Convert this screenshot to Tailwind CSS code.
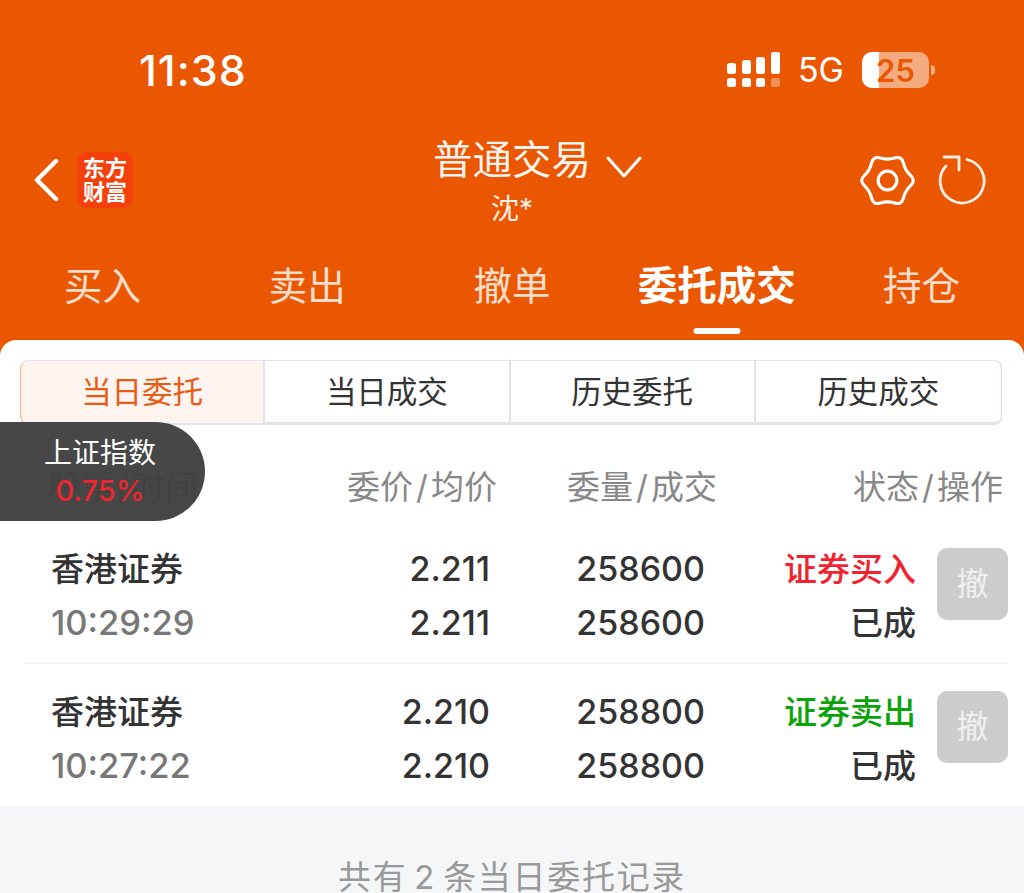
<!DOCTYPE html>
<html lang="zh-CN">
<head>
  <meta charset="UTF-8">
  <meta name="viewport" content="width=device-width, initial-scale=1.0">
  <title>委托成交</title>
  <script src="https://cdn.jsdelivr.net/npm/@tailwindcss/browser@4"></script>
</head>
<body class="bg-[#eb5600] font-['Inter','Noto_Sans_CJK_SC',sans-serif] h-[893px] overflow-hidden relative">

  <!-- status bar -->
  <div class="h-[130px] flex items-center pt-[10px] pl-[139px] pr-[89px] text-white">
    <span class="text-[43px] font-medium leading-none tracking-[1px]">11:38</span>
    <div class="ml-auto flex items-center">
      <svg width="54" height="36" viewBox="0 0 54 36" fill="#fff">
        <rect x="0" y="11" width="9" height="11" rx="2.5"/>
        <rect x="15" y="8" width="9" height="14" rx="2.5"/>
        <rect x="29" y="5" width="9" height="17" rx="2.5"/>
        <rect x="44" y="0" width="9" height="22" rx="2.5"/>
        <rect x="0" y="26" width="9" height="9" rx="2.5"/>
        <rect x="15" y="26" width="9" height="9" rx="2.5"/>
        <rect x="29" y="26" width="9" height="9" rx="2.5"/>
        <rect x="44" y="26" width="9" height="9" rx="2.5" opacity="0.35"/>
      </svg>
      <span class="ml-[17px] text-[34px] leading-none">5G</span>
      <div class="ml-[18px] w-[67px] h-[36px] rounded-[10px] bg-white/50 relative overflow-hidden flex items-center justify-center">
        <div class="absolute left-0 top-0 bottom-0 w-[17px] bg-white"></div>
        <span class="relative text-[#eb5600] text-[31px] font-semibold leading-none">25</span>
      </div>
      <div class="ml-[2px] w-[4px] h-[10px] rounded-r-full bg-white/50"></div>
    </div>
  </div>

  <!-- nav -->
  <div class="h-[100px] relative flex items-center justify-between pl-[34px] pr-[38px] text-white">
    <div class="flex items-center gap-[18px]">
      <svg width="25" height="42" viewBox="0 0 25 42" fill="none" stroke="#fff" stroke-width="4.5" stroke-linecap="round" stroke-linejoin="round"><path d="M22 2 3 21l19 19"/></svg>
      <div class="w-[56px] h-[56px] rounded-[10px] bg-[#f4410c] flex flex-col items-center justify-center font-bold text-[22px] leading-[24px]">
        <span>东方</span>
        <span>财富</span>
      </div>
    </div>
    <div class="absolute left-[433px] top-0 flex flex-col">
      <div class="flex items-center">
        <span class="text-[39.5px] leading-[60px] text-white/95">普通交易</span>
        <svg class="ml-[15px] mt-[14px]" width="36" height="24" viewBox="0 0 36 24" fill="none" stroke="#fff" stroke-width="3" stroke-linecap="round" stroke-linejoin="round"><path d="M2 3l16 18L34 3"/></svg>
      </div>
      <span class="pl-[58px] text-[28px] leading-[34px] mt-[2px] text-white/90">沈*</span>
    </div>
    <div class="flex items-center gap-[21px]">
      <svg width="59" height="59" viewBox="0 0 60 60" fill="none" stroke="#fff" stroke-width="3.2" stroke-linejoin="round">
        <path d="M53.47 24.82Q59 30 53.47 35.18Q47.93 40.35 46.22 47.73Q44.5 55.11 37.25 52.9Q30 50.7 22.75 52.9Q15.5 55.11 13.78 47.73Q12.07 40.35 6.53 35.18Q1 30 6.53 24.82Q12.07 19.65 13.78 12.27Q15.5 4.89 22.75 7.1Q30 9.3 37.25 7.1Q44.5 4.89 46.22 12.27Q47.93 19.65 53.47 24.82Z"/>
        <circle cx="30" cy="30" r="9.5"/>
      </svg>
      <svg width="48" height="50" viewBox="0 0 48 50" fill="none" stroke="#fff" stroke-opacity="0.9" stroke-width="2.8" stroke-linecap="round" stroke-linejoin="round">
        <path d="M29 4.5A22 22 0 1 1 8 11"/>
        <path d="M6 2h15v13"/>
      </svg>
    </div>
  </div>

  <!-- tabs -->
  <div class="grid grid-cols-5 h-[110px] text-center text-white/80 text-[38.5px]">
    <div class="pt-[28px] leading-[56px]">买入</div>
    <div class="pt-[28px] leading-[56px]">卖出</div>
    <div class="pt-[28px] leading-[56px]">撤单</div>
    <div class="pt-[28px] leading-[56px] text-[39.5px] text-white font-bold relative">
      委托成交
      <div class="absolute left-1/2 -translate-x-1/2 bottom-[6px] w-[47px] h-[6px] rounded-full bg-white"></div>
    </div>
    <div class="pt-[28px] leading-[56px]">持仓</div>
  </div>

  <!-- card -->
  <div class="bg-white rounded-t-[16px] h-[466px] pt-[20px]">
    <div class="mx-[20px] w-[982px] h-[65px] grid grid-cols-4 rounded-[8px] border-b-[3px] border-[#e2e3ec] border-t border-r border-r-[#eacfc4] text-[30.5px] text-[#333] text-center leading-[62px]">
      <div class="bg-[#fdf4f0] text-[#eb5a14] border-l border-[#f2b08f] rounded-l-[8px] border-r-2 border-r-[#e2e3ec]">当日委托</div>
      <div class="border-r-2 border-[#e2e3ec]">当日成交</div>
      <div class="border-r-2 border-[#e2e3ec]">历史委托</div>
      <div>历史成交</div>
    </div>

    <!-- table head -->
    <div class="grid grid-cols-[48px_449px_220px_1fr] h-[105px] pt-[36px] text-[33px] leading-[52px] text-[#888]">
      <div></div>
      <div class="flex justify-between">
        <span>股票<span class="mx-[3px]">/</span>时间</span>
        <span>委价<span class="mx-[3px]">/</span>均价</span>
      </div>
      <div class="text-right">委量<span class="mx-[3px]">/</span>成交</div>
      <div class="text-right pr-[21px]">状态<span class="mx-[3px]">/</span>操作</div>
    </div>

    <!-- rows -->
    <div class="ml-[24px] mr-[16px] h-[134px] border-b-2 border-[#f3f3f5] grid grid-cols-[27px_1fr_139px_215px_211px_92px] pt-[12px] text-[33px] leading-[54px] text-[#333] font-medium">
      <div></div>
      <div>
        <div>香港证券</div>
        <div class="text-[34.5px] text-[#777]">10:29:29</div>
      </div>
      <div class="text-right text-[34px]">
        <div>2.211</div>
        <div>2.211</div>
      </div>
      <div class="text-right text-[34px]">
        <div>258600</div>
        <div>258600</div>
      </div>
      <div class="text-right">
        <div class="text-[#f0242f]">证券买入</div>
        <div>已成</div>
      </div>
      <div class="pl-[21px] pt-[6px]">
        <div class="w-[71px] h-[72px] rounded-[10px] bg-[#cccccc] text-[#f0f0f0] flex items-center justify-center text-[32px] font-normal">撤</div>
      </div>
    </div>
    <div class="ml-[24px] mr-[16px] h-[142px] grid grid-cols-[27px_1fr_139px_215px_211px_92px] pt-[21px] text-[33px] leading-[54px] text-[#333] font-medium">
      <div></div>
      <div>
        <div>香港证券</div>
        <div class="text-[34.5px] text-[#777]">10:27:22</div>
      </div>
      <div class="text-right text-[34px]">
        <div>2.210</div>
        <div>2.210</div>
      </div>
      <div class="text-right text-[34px]">
        <div>258800</div>
        <div>258800</div>
      </div>
      <div class="text-right">
        <div class="text-[#0aa30a]">证券卖出</div>
        <div>已成</div>
      </div>
      <div class="pl-[21px] pt-[6px]">
        <div class="w-[71px] h-[72px] rounded-[10px] bg-[#cccccc] text-[#f0f0f0] flex items-center justify-center text-[32px] font-normal">撤</div>
      </div>
    </div>
  </div>

  <!-- footer -->
  <div class="bg-[#f5f6f8] h-[87px] pt-[56px] text-center text-[33px] leading-[30px] text-[#999] tracking-[1.7px] [word-spacing:-4px]">共有 2 条当日委托记录</div>

  <!-- floating index pill -->
  <div class="absolute left-0 top-[422px] w-[205px] h-[99px] rounded-r-[50px] bg-[#3f3f3f]/[0.96] flex flex-col items-center pr-[5px] pt-[11px]">
    <span class="text-white text-[28px] leading-[40px]">上证指数</span>
    <span class="text-[#f0242f] text-[29px] leading-[36px] font-medium">0.75%</span>
  </div>
</body>
</html>
